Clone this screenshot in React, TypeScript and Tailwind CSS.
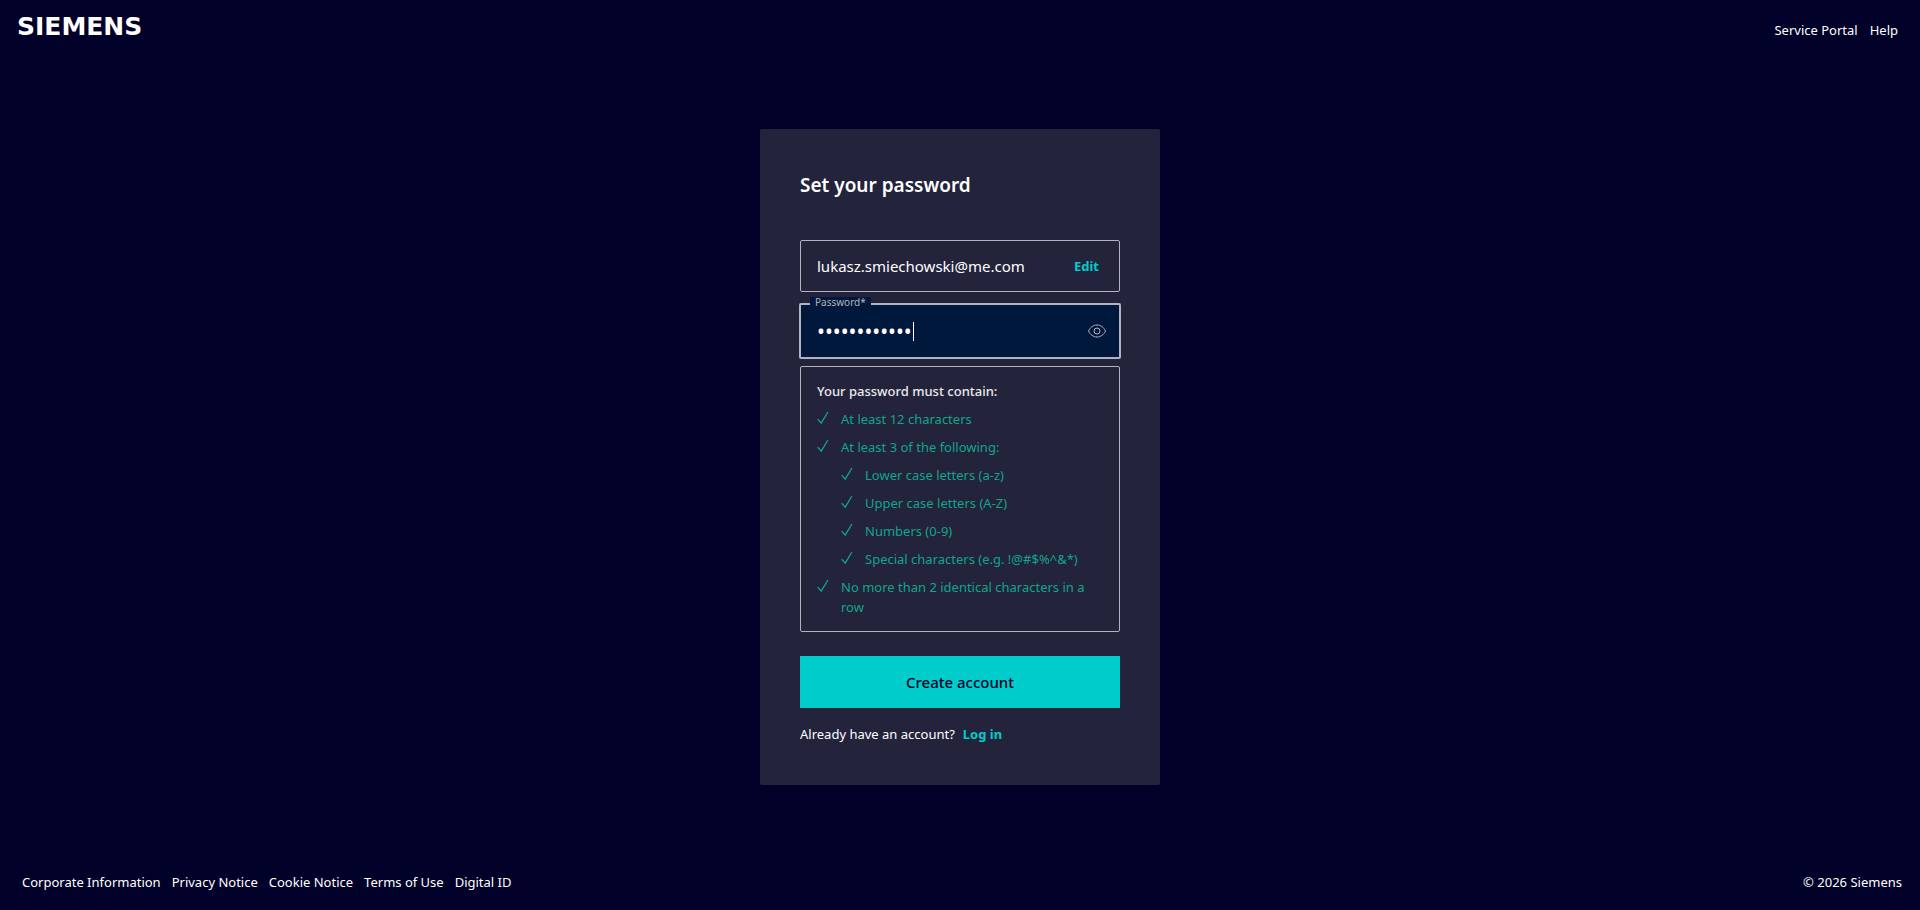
import { useState } from "react";

const legalLinks = [
  "Corporate Information",
  "Privacy Notice",
  "Cookie Notice",
  "Terms of Use",
  "Digital ID",
];

const characterRules = [
  "Lower case letters (a-z)",
  "Upper case letters (A-Z)",
  "Numbers (0-9)",
  "Special characters (e.g. !@#$%^&*)",
];

function CheckIcon() {
  return (
    <svg viewBox="0 0 12 14" className="mt-0.5 h-3.5 w-3 shrink-0" fill="none" stroke="currentColor" aria-hidden="true">
      <path d="M0.8 8.2 4.2 12.2 11 1" strokeWidth="1.3" />
    </svg>
  );
}

function EyeIcon() {
  return (
    <svg viewBox="0 0 20 16" className="h-4 w-5" fill="none" stroke="currentColor" aria-hidden="true">
      <path d="M1.5 8C3.4 4.2 6.4 2 10 2s6.6 2.2 8.5 6c-1.9 3.8-4.9 6-8.5 6S3.4 11.8 1.5 8Z" />
      <circle cx="10" cy="8" r="3" />
    </svg>
  );
}

function Rule({ children }: { children: string }) {
  return (
    <div className="flex gap-3">
      <CheckIcon />
      <span>{children}</span>
    </div>
  );
}

export default function App() {
  const [password, setPassword] = useState("Abcdefgh123!");
  const [visible, setVisible] = useState(false);

  return (
    <div className="flex min-h-screen flex-col bg-[#000028] font-['Noto_Sans',sans-serif] text-[13px] leading-5 text-white">
      <header className="flex items-start justify-between pt-3 pr-[22px] pl-[17px]">
        <a href="#" className="font-['DejaVu_Sans',sans-serif] text-[25px] leading-[30px] font-bold">
          SIEMENS
        </a>
        <nav className="flex gap-3 pt-2">
          <a href="#">Service Portal</a>
          <a href="#">Help</a>
        </nav>
      </header>

      <main className="flex flex-1 items-center justify-center py-4">
        <form className="w-full max-w-[400px] rounded-xs bg-[#23233c] px-10 pt-10 pb-[41px]" onSubmit={(e) => e.preventDefault()}>
          <h1 className="text-[19px] leading-8 font-semibold">Set your password</h1>

          <div className="mt-[39px] flex h-[52px] items-center justify-between rounded-xs border border-[#b3b3be] pr-5 pl-4">
            <span className="text-[15px]">lukasz.smiechowski@me.com</span>
            <a href="#" className="font-bold text-[#00cccc]">
              Edit
            </a>
          </div>

          <div className="relative -mx-px mt-[11px] flex h-14 items-center rounded-xs border-2 border-[#b3b3be] bg-[#00183b] pr-3 pl-4">
            <label htmlFor="password" className="absolute -top-2 left-[9px] bg-[#00183b] px-[5px] text-[10px] leading-[10px] text-[#b3b3be]">
              Password*
            </label>
            <input
              id="password"
              type={visible ? "text" : "password"}
              value={password}
              onChange={(e) => setPassword(e.target.value)}
              className="min-w-0 flex-1 bg-transparent text-[21px] caret-transparent outline-none"
            />
            <span className="pointer-events-none absolute top-[17px] left-28 h-[19px] w-px bg-white" />
            <button
              type="button"
              aria-label="Show password"
              className="text-[#b3b3be]"
              onClick={() => setVisible(!visible)}
            >
              <EyeIcon />
            </button>
          </div>

          {/* Password requirements */}
          <div className="mt-[7px] rounded-xs border border-[#b3b3be] px-4 py-3.5 text-[#12a58a]">
            <p className="font-medium text-[#ebebee]">Your password must contain:</p>
            <ul className="mt-2 space-y-2">
              <li>
                <Rule>At least 12 characters</Rule>
              </li>
              <li>
                <Rule>At least 3 of the following:</Rule>
                <ul className="mt-2 space-y-2 pl-6">
                  {characterRules.map((rule) => (
                    <li key={rule}>
                      <Rule>{rule}</Rule>
                    </li>
                  ))}
                </ul>
              </li>
              <li>
                <Rule>No more than 2 identical characters in a row</Rule>
              </li>
            </ul>
          </div>

          <button type="submit" className="mt-6 h-[52px] w-full bg-[#00cccc] text-[15px] font-medium text-[#000028]">
            Create account
          </button>

          <p className="mt-4">
            Already have an account?
            <a href="#" className="ml-2 font-bold text-[#00cccc]">
              Log in
            </a>
          </p>
        </form>
      </main>

      <footer className="flex items-center justify-between pr-[18px] pb-[18px] pl-[22px]">
        <nav className="flex gap-[11px]">
          {legalLinks.map((link) => (
            <a key={link} href="#">
              {link}
            </a>
          ))}
        </nav>
        <span>© 2026 Siemens</span>
      </footer>
    </div>
  );
}
